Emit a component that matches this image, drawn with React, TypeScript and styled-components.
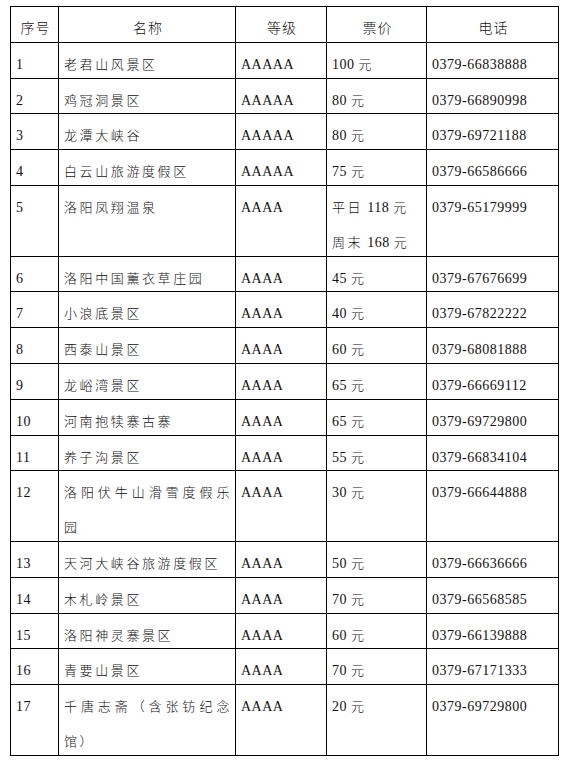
import React from 'react';
import styled, { createGlobalStyle } from 'styled-components';

const GlobalStyle = createGlobalStyle`
  html, body {
    margin: 0;
    padding: 0;
    background: #fff;
  }
  body {
    font-family: 'Liberation Serif', 'Noto Sans CJK SC', serif;
    color: #111;
  }
`;

const Page = styled.div`
  padding: 6px 0 0 10px;
`;

const Grid = styled.div`
  display: grid;
  grid-template-columns: 47px 176px 90px 99px 131px;
  gap: 1px;
  padding: 1px;
  width: max-content;
  background: #000;
`;

const Cell = styled.div<{ $head?: boolean }>`
  background: #fff;
  padding: 0 3px 0 5px;
  font-size: 14px;
  line-height: 34.8px;
  text-align: ${p => (p.$head ? 'center' : 'justify')};
`;

// the text sits low in each line box, as in the source document
const Run = styled.span<{ $cjk: boolean; $head?: boolean }>`
  vertical-align: -5px;
  line-height: 16px;
  font-family: ${p =>
    p.$cjk ? "'Noto Sans CJK SC', sans-serif" : "'Liberation Serif', serif"};
  font-size: ${p => (p.$cjk && !p.$head ? '13px' : '14px')};
  font-weight: ${p => (p.$cjk ? 300 : 400)};
  letter-spacing: ${p => (p.$cjk ? (p.$head ? '1px' : '2.6px') : '0.5px')};
`;

const CJK = /([\u3000-\u303f\u4e00-\u9fff\uff00-\uffef]+)/;

function Text({ value, head }: { value: string; head?: boolean }) {
  const parts = value.split(CJK).filter(Boolean);
  return (
    <>
      {parts.map((part, i) => (
        <Run key={i} $cjk={CJK.test(part)} $head={head}>
          {part}
        </Run>
      ))}
    </>
  );
}

interface Spot {
  no: string;
  name: string;
  level: string;
  price: string[];
  phone: string;
}

const spots: Spot[] = [
  { no: '1', name: '老君山风景区', level: 'AAAAA', price: ['100 元'], phone: '0379-66838888' },
  { no: '2', name: '鸡冠洞景区', level: 'AAAAA', price: ['80 元'], phone: '0379-66890998' },
  { no: '3', name: '龙潭大峡谷', level: 'AAAAA', price: ['80 元'], phone: '0379-69721188' },
  { no: '4', name: '白云山旅游度假区', level: 'AAAAA', price: ['75 元'], phone: '0379-66586666' },
  { no: '5', name: '洛阳凤翔温泉', level: 'AAAA', price: ['平日 118 元', '周末 168 元'], phone: '0379-65179999' },
  { no: '6', name: '洛阳中国薰衣草庄园', level: 'AAAA', price: ['45 元'], phone: '0379-67676699' },
  { no: '7', name: '小浪底景区', level: 'AAAA', price: ['40 元'], phone: '0379-67822222' },
  { no: '8', name: '西泰山景区', level: 'AAAA', price: ['60 元'], phone: '0379-68081888' },
  { no: '9', name: '龙峪湾景区', level: 'AAAA', price: ['65 元'], phone: '0379-66669112' },
  { no: '10', name: '河南抱犊寨古寨', level: 'AAAA', price: ['65 元'], phone: '0379-69729800' },
  { no: '11', name: '养子沟景区', level: 'AAAA', price: ['55 元'], phone: '0379-66834104' },
  { no: '12', name: '洛阳伏牛山滑雪度假乐园', level: 'AAAA', price: ['30 元'], phone: '0379-66644888' },
  { no: '13', name: '天河大峡谷旅游度假区', level: 'AAAA', price: ['50 元'], phone: '0379-66636666' },
  { no: '14', name: '木札岭景区', level: 'AAAA', price: ['70 元'], phone: '0379-66568585' },
  { no: '15', name: '洛阳神灵寨景区', level: 'AAAA', price: ['60 元'], phone: '0379-66139888' },
  { no: '16', name: '青要山景区', level: 'AAAA', price: ['70 元'], phone: '0379-67171333' },
  { no: '17', name: '千唐志斋（含张钫纪念馆）', level: 'AAAA', price: ['20 元'], phone: '0379-69729800' },
];

const headers = ['序号', '名称', '等级', '票价', '电话'];

export default function App() {
  return (
    <>
      <GlobalStyle />
      <Page>
        <Grid>
          {headers.map(h => (
            <Cell key={h} $head>
              <Text value={h} head />
            </Cell>
          ))}
          {spots.map(s => (
            <React.Fragment key={s.no}>
              <Cell>
                <Text value={s.no} />
              </Cell>
              <Cell>
                <Text value={s.name} />
              </Cell>
              <Cell>
                <Text value={s.level} />
              </Cell>
              <Cell>
                {s.price.map((p, i) => (
                  <React.Fragment key={p}>
                    {i > 0 && <br />}
                    <Text value={p} />
                  </React.Fragment>
                ))}
              </Cell>
              <Cell>
                <Text value={s.phone} />
              </Cell>
            </React.Fragment>
          ))}
        </Grid>
      </Page>
    </>
  );
}
